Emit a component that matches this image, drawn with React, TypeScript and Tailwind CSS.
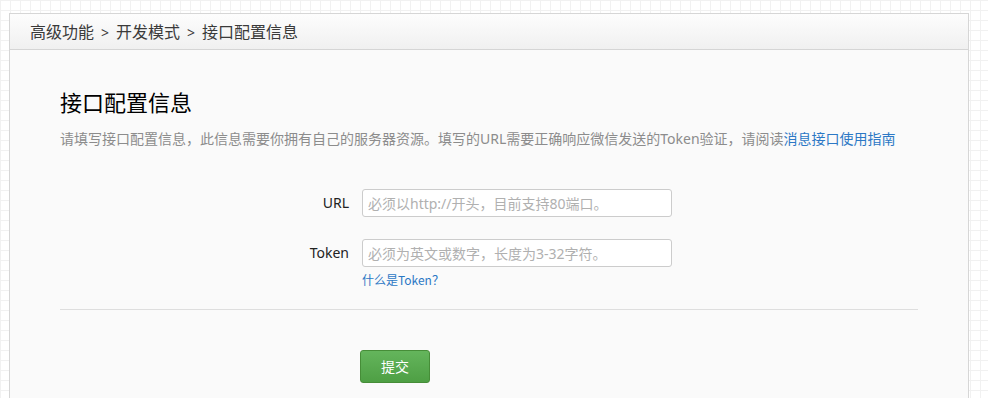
import React from "react";

const font = "font-['Noto_Sans','Noto_Sans_CJK_SC',sans-serif]";

function Field({ label, placeholder }: { label: string; placeholder: string }) {
    return (
        <div className="flex items-center">
            <label className="w-[289px] text-right text-[14px] text-[#222] leading-[28px]">{label}</label>
            <input
                className="ml-[13px] w-[310px] h-[28px] border border-[#cccccc] rounded-[3px] bg-white px-[5px] text-[14px] outline-none placeholder:text-[#b0b0b0]"
                placeholder={placeholder}
            />
        </div>
    );
}

export default function App() {
    return (
        <div
            className={`${font} w-[988px] h-[398px] overflow-hidden bg-white bg-[linear-gradient(#f1f1f1_1px,transparent_1px),linear-gradient(90deg,#f1f1f1_1px,transparent_1px)] bg-[size:10px_10px] pt-[13px] pl-[9px]`}
        >
            <div className="w-[960px] h-[420px] border border-[#d6d6d6] bg-[#fafafa]">
                {/* breadcrumb bar */}
                <div className="h-[36px] border-b border-[#d5d5d5] bg-gradient-to-b from-[#fdfdfd] to-[#f0f0f0] flex items-center pl-[20px] text-[16px] text-[#3a3a3a] pt-[1px]">
                    高级功能<span className="px-[7px] text-[14px]">&gt;</span>开发模式<span className="px-[7px] text-[14px]">&gt;</span>接口配置信息
                </div>

                <div className="px-[50px] pt-[37px]">
                    <h1 className="text-[22px] leading-[30px] text-black">接口配置信息</h1>
                    <p className="mt-[12px] text-[14px] leading-[20px] text-[#8c8c8c] whitespace-nowrap">
                        请填写接口配置信息，此信息需要你拥有自己的服务器资源。填写的URL需要正确响应微信发送的Token验证，请阅读
                        <a href="#" className="text-[#2c78c5]">消息接口使用指南</a>
                    </p>

                    <div className="mt-[40px]">
                        <Field label="URL" placeholder="必须以http://开头，目前支持80端口。" />
                        <div className="mt-[22px]">
                            <Field label="Token" placeholder="必须为英文或数字，长度为3-32字符。" />
                        </div>
                        <div className="pl-[302px] mt-[5px]">
                            <a href="#" className="text-[12px] leading-[16px] text-[#2c78c5] block font-['Noto_Sans_CJK_SC',sans-serif]">什么是Token？</a>
                        </div>
                    </div>

                    <div className="mt-[21px] border-t border-[#dedede]" />

                    <div className="pl-[300px] mt-[40px]">
                        <button className="w-[70px] h-[33px] rounded-[3px] border border-[#468d38] bg-gradient-to-b from-[#64b55c] to-[#4e9f44] text-white text-[14px]">
                            提交
                        </button>
                    </div>
                </div>
            </div>
        </div>
    );
}
